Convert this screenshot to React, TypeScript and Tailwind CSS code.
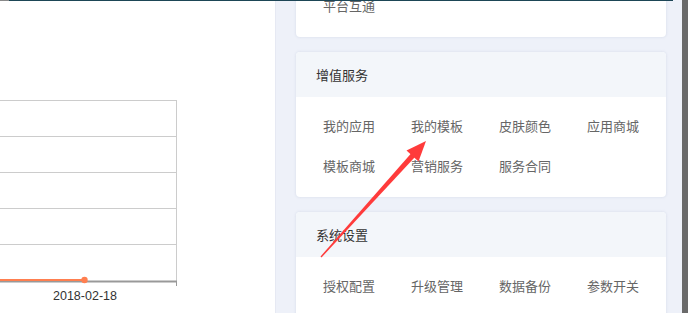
import React from "react";

const font = { fontFamily: '"Noto Sans CJK SC", "Noto Sans", sans-serif' };

function Card({
  title,
  rows,
  className = "",
}: {
  title?: string;
  rows: string[][];
  className?: string;
}) {
  return (
    <div
      className={`w-[370px] shrink-0 bg-white rounded-[4px] shadow-[0_0_3px_rgba(120,130,170,0.22)] overflow-hidden ${className}`}
    >
      {title && (
        <div className="h-[45px] bg-[#f3f6fa] pl-[20px] flex items-center text-[13px] text-[#333]">
          {title}
        </div>
      )}
      <div className="pl-[27px] pt-[8px] pb-[12px]">
        {rows.map((r, i) => (
          <div key={i} className="h-[40px] flex items-center text-[13px] text-[#666]">
            {r.map((t) => (
              <div key={t} className="w-[88px] shrink-0 leading-none">
                {t}
              </div>
            ))}
          </div>
        ))}
      </div>
    </div>
  );
}

export default function App() {
  return (
    <div className="relative w-[688px] h-[313px] overflow-hidden flex bg-[#eef1f9]" style={font}>
      {/* left chart panel */}
      <div className="w-[276px] h-full bg-white border-r border-[#e6e9f3] shrink-0">
        <svg width="276" height="313" className="block">
          {[100, 136, 172, 208, 244].map((y) => (
            <line key={y} x1="0" x2="176" y1={y + 0.5} y2={y + 0.5} stroke="#cccccc" strokeWidth="1" />
          ))}
          <line x1="176.5" x2="176.5" y1="100" y2="281" stroke="#cccccc" strokeWidth="1" />
          <line x1="0" x2="177" y1="281.5" y2="281.5" stroke="#999999" strokeWidth="2" />
          <line x1="176.5" x2="176.5" y1="281" y2="286" stroke="#999999" strokeWidth="1" />
          <line x1="0" x2="85" y1="280" y2="280" stroke="#ff7f50" strokeWidth="2" />
          <circle cx="84.5" cy="280" r="3.2" fill="#ff7f50" />
          <text
            x="85"
            y="300"
            textAnchor="middle"
            fontSize="12.5"
            fill="#333"
            style={{ fontFamily: '"Liberation Sans", Arial, sans-serif' }}
          >
            2018-02-18
          </text>
        </svg>
      </div>

      {/* right column */}
      <div className="flex-1 flex flex-col pl-[20px] gap-[15px] min-h-0">
        <Card rows={[["平台互通"]]} className="-mt-[15px] [&>div]:pt-0" />
        <Card title="增值服务" rows={[["我的应用", "我的模板", "皮肤颜色", "应用商城"], ["模板商城", "营销服务", "服务合同"]]} />
        <Card title="系统设置" rows={[["授权配置", "升级管理", "数据备份", "参数开关"]]} />
      </div>

      {/* scrollbar */}
      <div className="w-[6px] h-full bg-[#6a6a6a] shrink-0" />

      {/* top dark line */}
      <div className="absolute top-0 left-[9px] w-[664px] h-px bg-[#1d4656]" />
      <div className="absolute top-0 left-0 w-[9px] h-px bg-[#8a8a8a]" />

      {/* red annotation arrow */}
      <svg className="absolute inset-0 pointer-events-none" width="688" height="313">
        <polygon points="320.5,256.5 411,153.5 415,157 321.5,257.5" fill="#ff3b3b" />
        <polygon points="426,141 406.5,150.5 418.5,161.5" fill="#ff3b3b" />
      </svg>
    </div>
  );
}
